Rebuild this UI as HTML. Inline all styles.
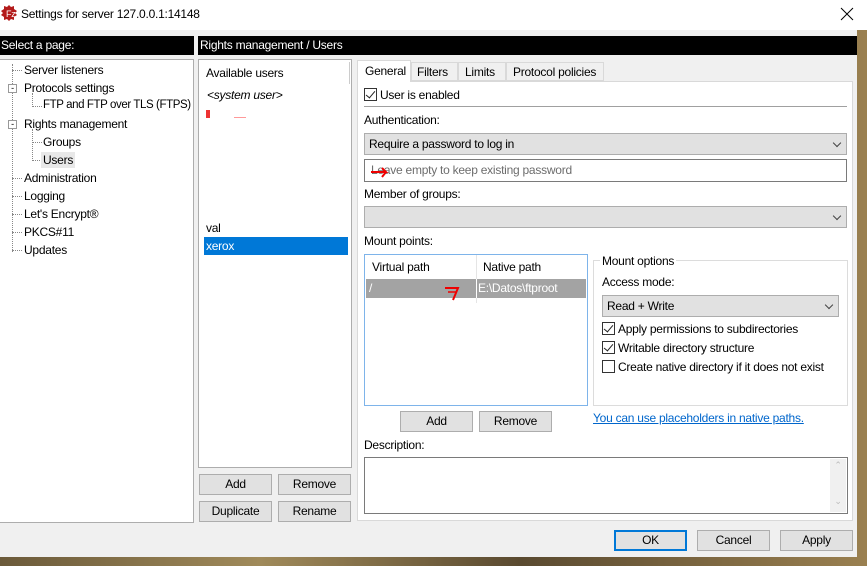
<!DOCTYPE html>
<html><head><style>
*{margin:0;padding:0;box-sizing:border-box}
body{width:867px;height:566px;overflow:hidden;position:relative;font-family:"Liberation Sans",sans-serif;font-size:12px;letter-spacing:-0.25px;color:#000;background:linear-gradient(90deg,#6b5a3a,#a08a5a 30%,#5a4a30 60%,#9a8050)}
.a{position:absolute;white-space:nowrap}
.win{position:absolute;left:0;top:0;width:857px;height:557px;background:#f0f0f0}
.btn{position:absolute;background:#e1e1e1;border:1px solid #adadad;text-align:center;line-height:18px}
.cb{position:absolute;width:13px;height:13px;border:1px solid #333;background:#fff}
.cb.c::after{content:"";position:absolute;left:3px;top:0px;width:4px;height:8px;border:solid #222;border-width:0 1.5px 1.5px 0;transform:rotate(40deg)}
.combo{position:absolute;background:#e1e1e1;border:1px solid #adadad;padding-left:4px;line-height:20px}
.combo::after{content:"";position:absolute;right:6px;top:6px;width:5px;height:5px;border:solid #444;border-width:0 1px 1px 0;transform:rotate(45deg)}
.dot{position:absolute;border-left:1px dotted #888}
.hd{position:absolute;border-top:1px dotted #888;height:0}
</style></head><body>
<div class="win">
<div class="a" style="left:0;top:0;width:867px;height:30px;background:#fff"></div>
<svg class="a" style="left:1px;top:5px" width="16" height="16" viewBox="0 0 16 16"><polygon points="8,0 10,2 13,1 13,4 16,6 14,8 16,10 13,12 13,15 10,14 8,16 6,14 3,15 3,12 0,10 2,8 0,6 3,4 3,1 6,2" fill="#b31b1b"/><text x="5" y="12" font-size="9" fill="#fff" font-family="Liberation Sans">Fz</text></svg>
<div class="a" style="left:21px;top:7px;font-size:12px">Settings for server 127.0.0.1:14148</div>
<svg class="a" style="left:840px;top:7px" width="14" height="14"><path d="M1 1L13 13M13 1L1 13" stroke="#000" stroke-width="1"/></svg>
<div class="a" style="left:0;top:36px;width:194px;height:19px;background:#000;color:#fff;line-height:19px;padding-left:1px">Select a page:</div>
<div class="a" style="left:198px;top:36px;width:659px;height:19px;background:#000;color:#fff;line-height:19px;padding-left:2px">Rights management / Users</div>
<div class="a" style="left:0;top:59px;width:194px;height:464px;background:#fff;border:1px solid #adadad;border-left:none"></div>
<div class="dot" style="left:12px;top:64px;height:188px"></div>
<div class="dot" style="left:32px;top:93px;height:14px"></div>
<div class="dot" style="left:32px;top:129px;height:32px"></div>
<div class="hd" style="left:12px;top:70px;width:10px"></div>
<div class="hd" style="left:12px;top:178px;width:10px"></div>
<div class="hd" style="left:12px;top:196px;width:10px"></div>
<div class="hd" style="left:12px;top:214px;width:10px"></div>
<div class="hd" style="left:12px;top:232px;width:10px"></div>
<div class="hd" style="left:12px;top:250px;width:10px"></div>
<div class="hd" style="left:32px;top:106px;width:10px"></div>
<div class="hd" style="left:32px;top:142px;width:10px"></div>
<div class="hd" style="left:32px;top:160px;width:10px"></div>
<div class="a" style="left:8px;top:84px;width:9px;height:9px;border:1px solid #999;background:#fff;font-size:9px;line-height:6px;text-align:center">-</div>
<div class="a" style="left:8px;top:120px;width:9px;height:9px;border:1px solid #999;background:#fff;font-size:9px;line-height:6px;text-align:center">-</div>
<div class="a" style="left:24px;top:63px">Server listeners</div>
<div class="a" style="left:24px;top:81px">Protocols settings</div>
<div class="a" style="left:43px;top:99px;font-size:11.5px;letter-spacing:-0.4px">FTP and FTP over TLS (FTPS)</div>
<div class="a" style="left:24px;top:117px">Rights management</div>
<div class="a" style="left:43px;top:135px">Groups</div>
<div class="a" style="left:41px;top:152px;background:#e8e8e8;padding:1px 2px">Users</div>
<div class="a" style="left:24px;top:171px">Administration</div>
<div class="a" style="left:24px;top:189px">Logging</div>
<div class="a" style="left:24px;top:207px">Let's Encrypt®</div>
<div class="a" style="left:24px;top:225px">PKCS#11</div>
<div class="a" style="left:24px;top:243px">Updates</div>
<div class="a" style="left:198px;top:59px;width:154px;height:409px;background:#fff;border:1px solid #adadad"></div>
<div class="a" style="left:349px;top:62px;width:1px;height:22px;background:#ccc"></div>
<div class="a" style="left:206px;top:66px">Available users</div>
<div class="a" style="left:207px;top:88px;font-style:italic">&lt;system user&gt;</div>
<div class="a" style="left:206px;top:110px;width:4px;height:8px;background:#e33"></div>
<div class="a" style="left:234px;top:117px;width:12px;height:1px;background:#f99"></div>
<div class="a" style="left:206px;top:221px">val</div>
<div class="a" style="left:204px;top:237px;width:144px;height:18px;background:#0078d7;color:#fff;padding-left:2px;line-height:18px">xerox</div>
<div class="btn" style="left:199px;top:474px;width:73px;height:21px">Add</div>
<div class="btn" style="left:278px;top:474px;width:73px;height:21px">Remove</div>
<div class="btn" style="left:199px;top:501px;width:73px;height:21px">Duplicate</div>
<div class="btn" style="left:278px;top:501px;width:73px;height:21px">Rename</div>
<div class="a" style="left:357px;top:81px;width:496px;height:440px;background:#fff;border:1px solid #d9d9d9"></div>
<div class="a" style="left:357px;top:60px;width:54px;height:22px;background:#fff;border:1px solid #d9d9d9;border-bottom:none;padding:3px 0 0 7px">General</div>
<div class="a" style="left:411px;top:62px;width:47px;height:19px;background:#f0f0f0;border:1px solid #d9d9d9;padding:2px 0 0 5px">Filters</div>
<div class="a" style="left:458px;top:62px;width:48px;height:19px;background:#f0f0f0;border:1px solid #d9d9d9;padding:2px 0 0 6px">Limits</div>
<div class="a" style="left:506px;top:62px;width:98px;height:19px;background:#f0f0f0;border:1px solid #d9d9d9;padding:2px 0 0 6px">Protocol policies</div>
<div class="cb c" style="left:364px;top:88px"></div>
<div class="a" style="left:380px;top:88px">User is enabled</div>
<div class="a" style="left:364px;top:106px;width:483px;height:1px;background:#a0a0a0"></div>
<div class="a" style="left:364px;top:113px">Authentication:</div>
<div class="combo" style="left:364px;top:133px;width:483px;height:22px">Require a password to log in</div>
<div class="a" style="left:364px;top:159px;width:483px;height:23px;border:1px solid #7a7a7a;background:#fff;color:#6d6d6d;padding:3px 0 0 6px">Leave empty to keep existing password</div>
<svg class="a" style="left:370px;top:164px" width="20" height="14"><path d="M1 8H16L12 4M16 8L12 13" stroke="#e00" stroke-width="2" fill="none"/></svg>
<div class="a" style="left:364px;top:187px">Member of groups:</div>
<div class="combo" style="left:364px;top:206px;width:483px;height:22px"></div>
<div class="a" style="left:364px;top:234px">Mount points:</div>
<div class="a" style="left:364px;top:254px;width:224px;height:152px;border:1px solid #7eb4ea;background:#fff"></div>
<div class="a" style="left:476px;top:255px;width:1px;height:48px;background:#e5e5e5"></div>
<div class="a" style="left:372px;top:260px">Virtual path</div>
<div class="a" style="left:483px;top:260px">Native path</div>
<div class="a" style="left:366px;top:279px;width:220px;height:19px;background:#a3a3a3;color:#fff;line-height:19px"><span style="padding-left:3px">/</span><span class="a" style="left:112px;top:0">E:\Datos\ftproot</span></div>
<div class="a" style="left:476px;top:279px;width:1px;height:19px;background:#fff"></div>
<svg class="a" style="left:444px;top:285px" width="20" height="16"><path d="M1 3H14L9 15" stroke="#e00" stroke-width="2" fill="none"/><path d="M4 7H12" stroke="#e00" stroke-width="1.5"/></svg>
<div class="a" style="left:593px;top:260px;width:255px;height:146px;border:1px solid #dcdcdc"></div>
<div class="a" style="left:600px;top:254px;background:#fff;padding:0 2px">Mount options</div>
<div class="a" style="left:602px;top:275px">Access mode:</div>
<div class="combo" style="left:602px;top:295px;width:237px;height:22px">Read + Write</div>
<div class="cb c" style="left:602px;top:322px"></div>
<div class="a" style="left:618px;top:322px">Apply permissions to subdirectories</div>
<div class="cb c" style="left:602px;top:341px"></div>
<div class="a" style="left:618px;top:341px">Writable directory structure</div>
<div class="cb" style="left:602px;top:360px"></div>
<div class="a" style="left:618px;top:360px">Create native directory if it does not exist</div>
<div class="btn" style="left:400px;top:411px;width:73px;height:21px">Add</div>
<div class="btn" style="left:479px;top:411px;width:73px;height:21px">Remove</div>
<div class="a" style="left:593px;top:411px;color:#0066cc;text-decoration:underline">You can use placeholders in native paths.</div>
<div class="a" style="left:364px;top:438px">Description:</div>
<div class="a" style="left:364px;top:457px;width:484px;height:57px;border:1px solid #7a7a7a;background:#fff"></div>
<div class="a" style="left:830px;top:459px;width:16px;height:53px;background:#f0f0f0;color:#bbb;font-size:9px;text-align:center;line-height:12px">⌃<br><br><br>⌄</div>
<div class="btn" style="left:614px;top:530px;width:73px;height:21px;border:2px solid #0078d7;line-height:17px">OK</div>
<div class="btn" style="left:697px;top:530px;width:73px;height:21px">Cancel</div>
<div class="btn" style="left:780px;top:530px;width:73px;height:21px">Apply</div>
</div>
</body></html>
